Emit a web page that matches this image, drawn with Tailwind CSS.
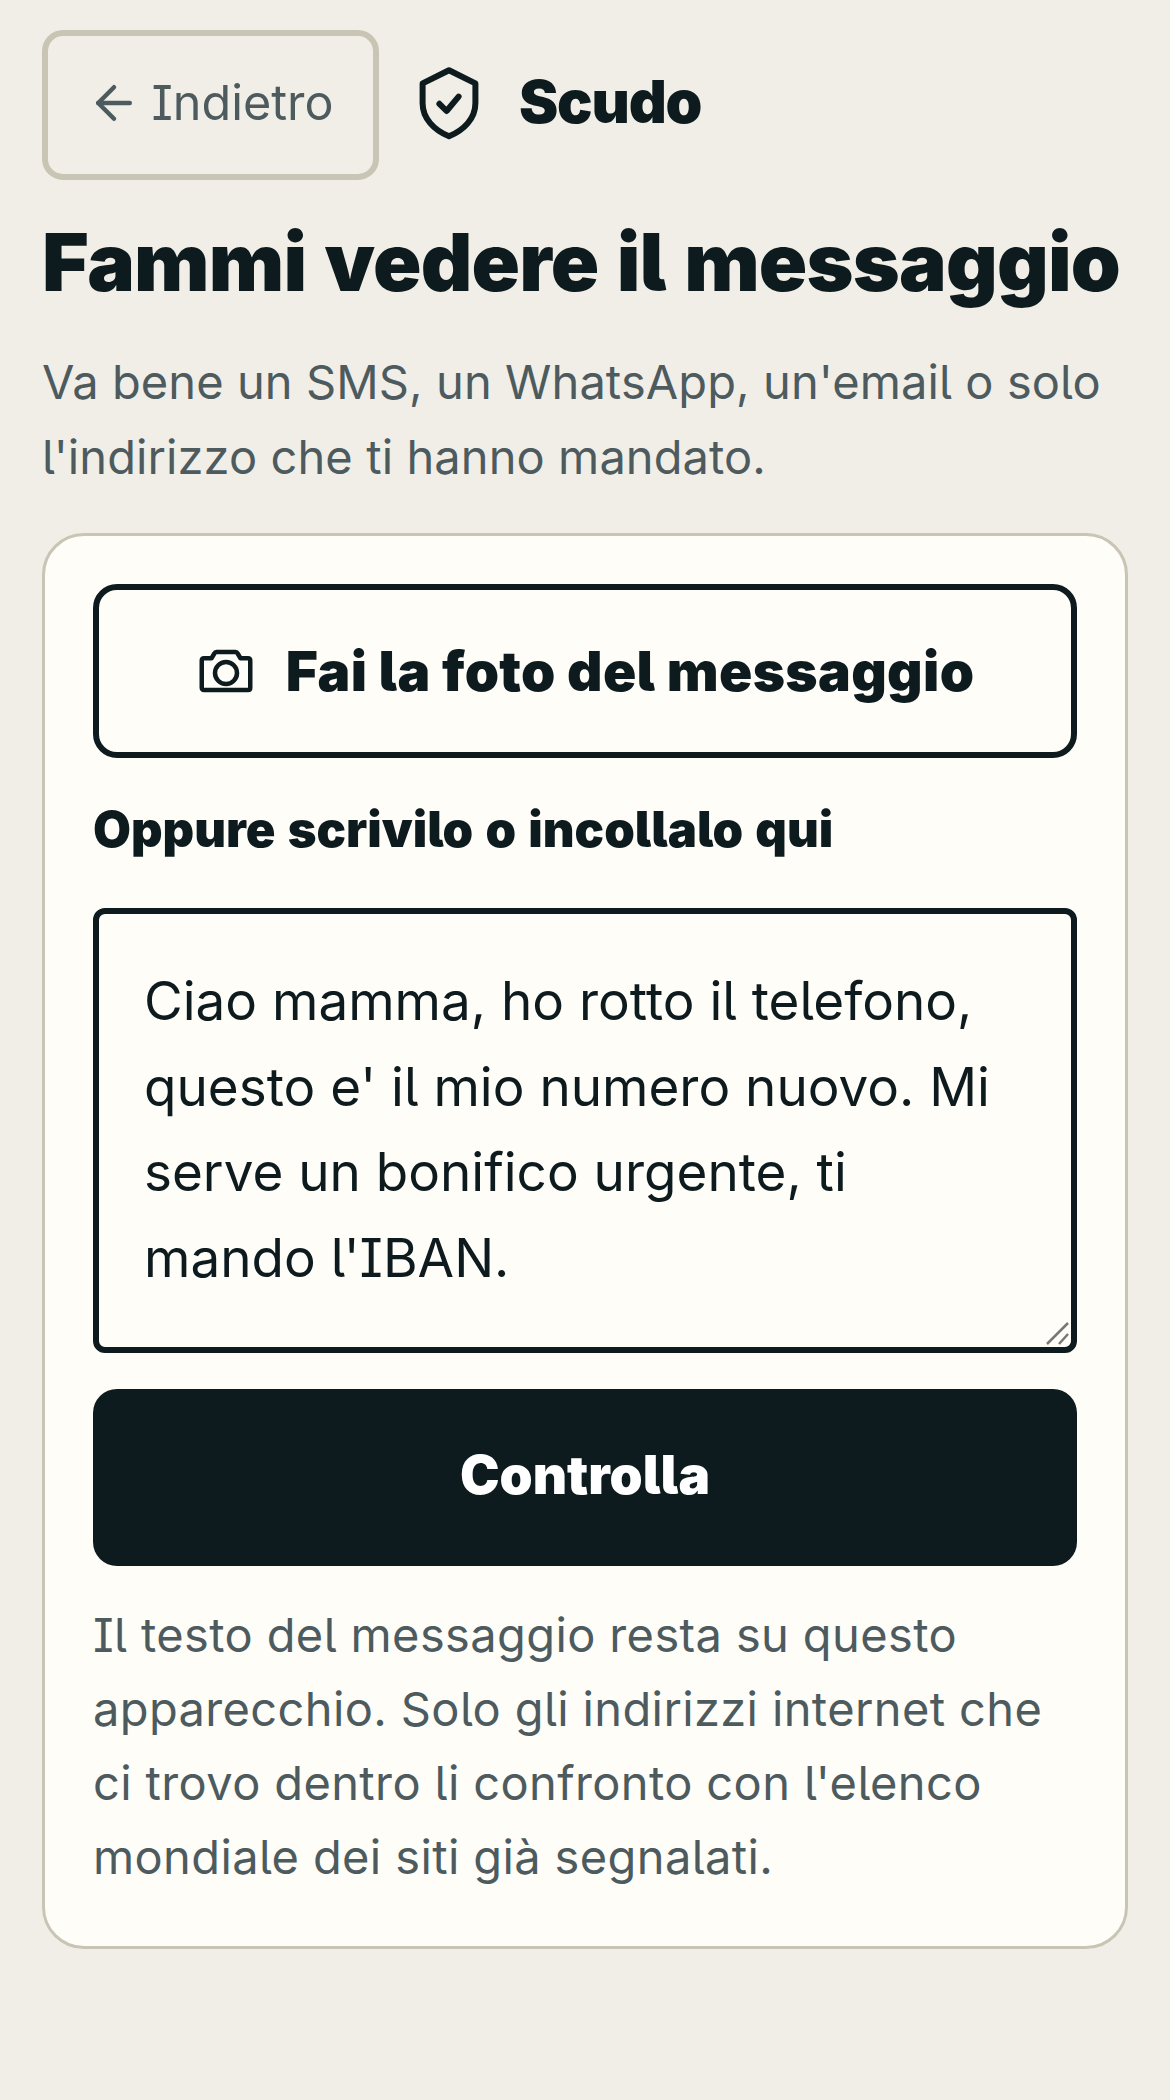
<!DOCTYPE html>
<html lang="it">
<head>
    <meta charset="UTF-8">
    <meta name="viewport" content="width=device-width, initial-scale=1.0">
    <title>Scudo</title>
    <script src="https://cdn.jsdelivr.net/npm/@tailwindcss/browser@4"></script>
</head>
<body class="bg-[#f1eee7] min-h-screen font-['Inter',sans-serif] [font-feature-settings:'cv05','cv08'] text-[#0d1b1e]">
    <div class="px-[42px] pt-[30px]">

        <!-- Top bar -->
        <div class="flex items-center gap-[34px]">
            <button class="flex items-center justify-center gap-[10px] w-[337px] h-[150px] pb-[4px] border-[6px] border-[#c9c5b5] rounded-[21px] text-[#4d5b5f] text-[48.500px]">
                <svg class="w-[54px] h-[54px]" viewBox="0 0 24 24" fill="none" stroke="currentColor" stroke-width="2" stroke-linecap="round" stroke-linejoin="round"><path d="M19 12H5"/><path d="m12 19-7-7 7-7"/></svg>
                Indietro
            </button>
            <div class="flex items-center gap-[34px] pb-[6px]">
                <svg class="w-[72px] h-[72px] overflow-visible" viewBox="0 0 24 24" fill="none" stroke="currentColor" stroke-width="2" stroke-linejoin="round" stroke-linecap="round"><path d="M12 1.400 20.800 5.800V12.400C20.800 17.400 17 21.400 12 23.400 7 21.400 3.200 17.400 3.200 12.400V5.800Z"/><path d="M8.800 12.600l2.400 2.400 4-4.800"/></svg>
                <span class="text-[59px] font-black tracking-[-0.02em]">Scudo</span>
            </div>
        </div>

        <h1 class="mt-[38px] text-[80px] leading-[88px] font-black tracking-[-0.01em] [word-spacing:0.04em]">Fammi vedere il messaggio</h1>
        <p class="mt-[38px] text-[47px] leading-[75px] tracking-[0.002em] text-[#4d5b5f]">Va bene un SMS, un WhatsApp, un'email o solo l'indirizzo che ti hanno mandato.</p>

        <!-- Card -->
        <div class="mt-[39px] bg-[#fffdf8] border-[3px] border-[#c9c5b5] rounded-[42px] px-[48px] pt-[48px] pb-[52px]">
            <button class="flex items-center justify-center gap-[30px] w-full h-[174px] border-[6px] border-[#0d1b1e] rounded-[24px] text-[55px] font-black tracking-[0.006em]">
                <svg class="w-[60px] h-[60px]" viewBox="0 0 24 24" fill="none" stroke="currentColor" stroke-width="1.800" stroke-linejoin="round"><path d="M3.200 6.900H6.200L7.400 4.900Q7.600 4.400 8.200 4.400H15.800Q16.400 4.400 16.600 4.900L17.800 6.900H20.800Q21.700 6.900 21.700 7.800V18.700Q21.700 19.600 20.800 19.600H3.200Q2.300 19.600 2.300 18.700V7.800Q2.300 6.900 3.200 6.900Z"/><circle cx="12" cy="12.800" r="4.400"/></svg>
                Fai la foto del messaggio
            </button>
            <label class="block mt-[42px] text-[49px] leading-[60px] font-black [word-spacing:0.05em]">Oppure scrivilo o incollalo qui</label>
            <div class="relative mt-[48px]">
                <textarea class="block w-full h-[445px] resize-none border-[6px] border-[#0d1b1e] rounded-[12px] px-[45px] pt-[45px] pb-[33px] text-[53px] leading-[85.500px] outline-none">Ciao mamma, ho rotto il telefono, questo e' il mio numero nuovo. Mi serve un bonifico urgente, ti mando l'IBAN.</textarea>
                <svg class="absolute right-[8px] bottom-[8px] w-[24px] h-[24px]" viewBox="0 0 24 24" fill="none" stroke="#777" stroke-width="2.500"><path d="M2 23 23 2"/><path d="M14 23 23 13"/></svg>
            </div>
            <button class="block mt-[36px] w-full h-[177px] pb-[3px] bg-[#0d1b1e] rounded-[24px] text-white text-[53px] font-black">Controlla</button>
            <p class="mt-[32px] text-[47px] leading-[74px] tracking-[0.008em] text-[#4d5b5f]">Il testo del messaggio resta su questo apparecchio. Solo gli indirizzi internet che<br>ci trovo dentro li confronto con l'elenco mondiale dei siti già segnalati.</p>
        </div>
    </div>
</body>
</html>
